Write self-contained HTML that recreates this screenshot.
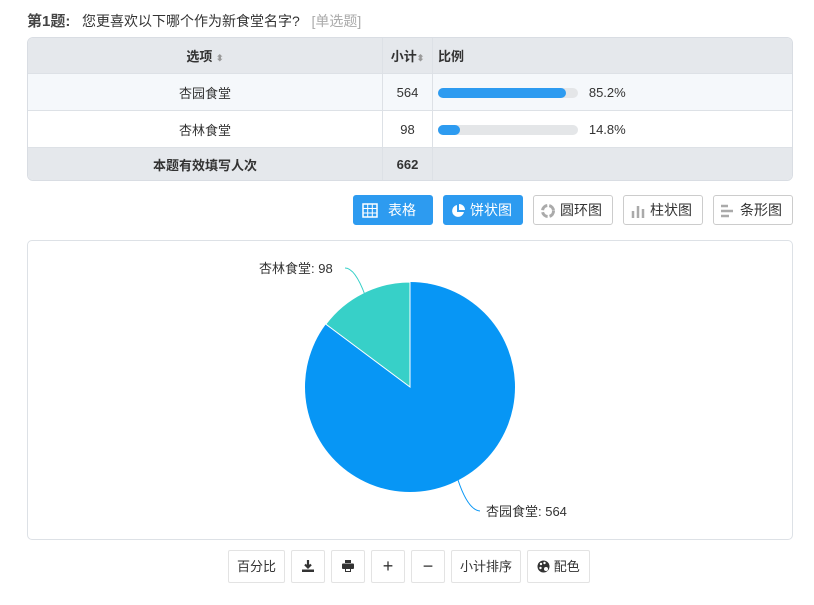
<!DOCTYPE html>
<html><head><meta charset="utf-8"><style>
body{margin:0;background:#fff;font-family:"Liberation Sans","Noto Sans CJK SC",sans-serif;font-size:13px;color:#333;width:814px;height:605px;position:relative;overflow:hidden}
.a{position:absolute}
.title{left:27px;top:10px;font-size:14px}
.title b{color:#444;font-size:15px}
table{position:absolute;left:27px;top:37px;width:766px;border-collapse:separate;border-spacing:0;border:1px solid #d9dde3;border-radius:6px;overflow:hidden}
td{border-top:1px solid #dde1e6;height:36px;text-align:center;padding:0}
td+td{border-left:1px solid #dde1e6}
tr:first-child td{border-top:none;background:#e5e8ec;font-weight:bold;height:35px}
tr.r1 td{background:#f5f8fb}
tr.tot td{background:#e5e8ec;font-weight:bold;height:32px}
.bar{display:inline-block;width:140px;height:10px;background:#e4e6e8;border-radius:5px;vertical-align:middle;position:relative;margin-left:5px}
.bar i{position:absolute;left:0;top:0;height:10px;border-radius:5px;background:#2d9bf0}
.btn{position:absolute;top:195px;border:1px solid #ccc;border-radius:3px;background:#fff;line-height:28px;font-size:14px;box-sizing:border-box;height:30px}
.btn.on{background:#2d9bf0;border-color:#2d9bf0;color:#fff}
.box{left:27px;top:240px;width:764px;height:298px;border:1px solid #dde1e6;border-radius:5px}
.sb{position:absolute;top:550px;height:33px;border:1px solid #e3e3e3;border-radius:2px;box-sizing:border-box;line-height:31px;text-align:center;font-size:13px}
</style></head><body>
<div class="a title"><b>第1题:</b>&nbsp;&nbsp;&nbsp;您更喜欢以下哪个作为新食堂名字? &nbsp;&nbsp;<span style="color:#aaa">[单选题]</span></div>
<table>
<tr><td style="width:354px">选项 <span style="color:#999;font-size:9px">⬍</span></td><td style="width:49px">小计<span style="color:#999;font-size:9px">⬍</span></td><td style="text-align:left;padding-left:5px">比例</td></tr>
<tr class="r1"><td>杏园食堂</td><td>564</td><td style="text-align:left"><span class="bar"><i style="width:128px"></i></span>&nbsp;&nbsp;&nbsp;85.2%</td></tr>
<tr><td>杏林食堂</td><td>98</td><td style="text-align:left"><span class="bar"><i style="width:22px"></i></span>&nbsp;&nbsp;&nbsp;14.8%</td></tr>
<tr class="tot"><td>本题有效填写人次</td><td>662</td><td></td></tr>
</table>
<div class="btn on" style="left:353px;width:80px"><svg class="a" style="left:8px;top:7px" width="16" height="15"><rect x="1" y="1" width="14" height="13" fill="none" stroke="#fff" stroke-width="1.5"/><path d="M1 5.5H15M1 10H15M5.7 1V14M10.3 1V14" stroke="#fff"/></svg><span class="a" style="left:34px">表格</span></div>
<div class="btn on" style="left:443px;width:80px"><svg class="a" style="left:6px;top:7px" width="16" height="16"><path d="M7 2A6 6 0 1 0 14 9H7Z" fill="#fff"/><path d="M9 1V7H15A6 6 0 0 0 9 1Z" fill="#fff"/></svg><span class="a" style="left:26px">饼状图</span></div>
<div class="btn" style="left:533px;width:80px"><svg class="a" style="left:6px;top:7px" width="16" height="16"><circle cx="8" cy="8" r="5.5" fill="none" stroke="#aaa" stroke-width="3" stroke-dasharray="7 2"/></svg><span class="a" style="left:26px">圆环图</span></div>
<div class="btn" style="left:623px;width:80px"><svg class="a" style="left:6px;top:7px" width="16" height="16"><path d="M3 15V8M8 15V3M13 15V6" stroke="#aaa" stroke-width="2.5"/></svg><span class="a" style="left:26px">柱状图</span></div>
<div class="btn" style="left:713px;width:80px"><svg class="a" style="left:6px;top:7px" width="16" height="16"><path d="M1 3H8M1 8H13M1 13H9" stroke="#aaa" stroke-width="2.5"/></svg><span class="a" style="left:26px">条形图</span></div>
<div class="a box"></div>
<svg class="a" style="left:0;top:0" width="814" height="605">
<circle cx="410" cy="387" r="105" fill="#0796f5"/>
<path d="M410 387L410 282A105 105 0 0 0 325.8 324.2Z" fill="#37d0c8" stroke="#fff" stroke-width="1"/>
<path d="M365 295Q355 268 345 268" fill="none" stroke="#37d0c8"/>
<path d="M458 480Q468 510 480 511" fill="none" stroke="#0796f5"/>
<text x="259" y="273" font-size="13" fill="#333" font-family="Liberation Sans,Noto Sans CJK SC,sans-serif">杏林食堂: 98</text>
<text x="486" y="516" font-size="13" fill="#333" font-family="Liberation Sans,Noto Sans CJK SC,sans-serif">杏园食堂: 564</text>
</svg>
<div class="sb" style="left:228px;width:57px">百分比</div>
<div class="sb" style="left:291px;width:34px"><svg width="12" height="12" style="vertical-align:-1px"><path d="M6 0V7M3 4.5L6 7.5L9 4.5" stroke="#333" stroke-width="2.2" fill="none"/><rect x="0" y="9.5" width="12" height="2.5" fill="#333"/></svg></div>
<div class="sb" style="left:331px;width:34px"><svg width="12" height="12" style="vertical-align:-1px"><rect x="3" y="0" width="6" height="3" fill="#333"/><rect x="0" y="3.5" width="12" height="5.5" rx="1" fill="#333"/><rect x="3" y="8" width="6" height="4" fill="#333"/><rect x="4" y="9" width="4" height="2" fill="#fff"/></svg></div>
<div class="sb" style="left:371px;width:34px;font-size:18px">+</div>
<div class="sb" style="left:411px;width:34px;font-size:18px">−</div>
<div class="sb" style="left:451px;width:70px">小计排序</div>
<div class="sb" style="left:527px;width:63px"><svg width="13" height="13" style="vertical-align:-2px"><circle cx="6.5" cy="6.5" r="6" fill="#333"/><circle cx="4" cy="4" r="1.2" fill="#fff"/><circle cx="7.5" cy="3" r="1.2" fill="#fff"/><circle cx="3.5" cy="8" r="1.2" fill="#fff"/><circle cx="9" cy="9" r="2" fill="#fff"/></svg> 配色</div>
</body></html>
